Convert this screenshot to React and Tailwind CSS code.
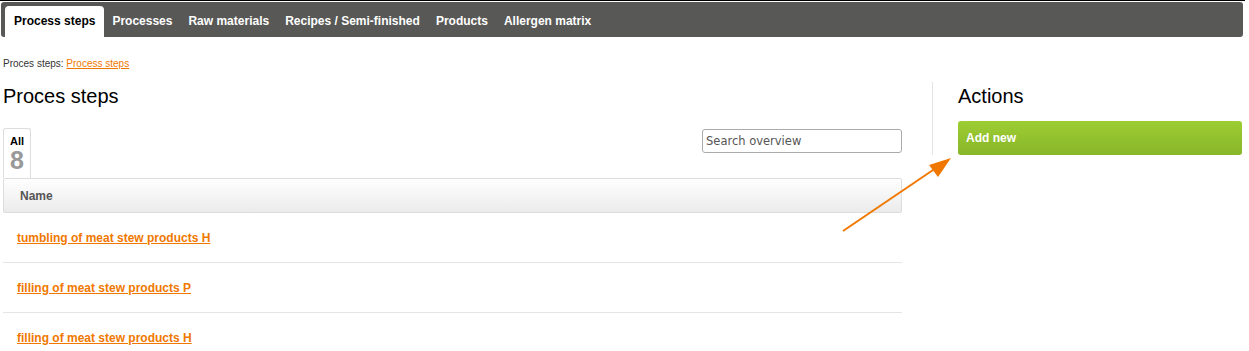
export default function App() {
  const tabs = ["Process steps", "Processes", "Raw materials", "Recipes / Semi-finished", "Products", "Allergen matrix"];
  const rows = ["tumbling of meat stew products H", "filling of meat stew products P", "filling of meat stew products H"];

  return (
    <div className="relative w-[1249px] h-[351px] overflow-hidden bg-white" style={{ fontFamily: '"Liberation Sans", Arial, sans-serif' }}>
      <div className="h-px bg-black w-[1245px]" />
      <div className="mt-px ml-px w-[1242px] h-[35px] bg-[#585856] rounded-[3px] flex items-end pl-[4px]">
        {tabs.map((t, i) => (
          <div
            key={t}
            className={
              i === 0
                ? "h-[31px] px-[9px] bg-white rounded-t-[4px] text-black text-[12px] font-bold flex items-center pb-[1px]"
                : "h-[31px] px-[8px] text-white text-[12px] font-bold flex items-center pb-[1px]"
            }
          >
            {t}
          </div>
        ))}
      </div>

      <div className="pl-[3px] mt-[21px] text-[10px] leading-[12px] text-[#333]">
        Proces steps: <a href="#" className="text-[#f07800] underline">Process steps</a>
      </div>

      <div className="flex pl-[3px] mt-[12px]">
        <div className="w-[899px]">
          <h1 className="mt-[3px] text-[20px] leading-[23px] text-black">Proces steps</h1>
          <div className="mt-[20px] flex items-start justify-between">
            <div className="w-[28px] h-[50px] border border-b-0 border-[#dddddd] rounded-t-[3px] flex flex-col items-center pt-[6px]">
              <span className="text-[11px] leading-[13px] font-bold text-black">All</span>
              <span className="text-[25px] leading-[24px] font-bold text-[#999999]">8</span>
            </div>
            <input
              placeholder="Search overview"
              className="mt-px w-[200px] h-[24px] border border-[#aaaaaa] rounded-[3px] px-[3px] text-[11.5px] text-[#555] placeholder:text-[#555] outline-none"
              style={{ fontFamily: '"DejaVu Sans", Verdana, sans-serif' }}
            />
          </div>
          <div className="h-[35px] border border-[#dddddd] rounded-[2px] bg-gradient-to-b from-white to-[#ebebeb] flex items-center pl-[16px]">
            <span className="text-[12px] font-bold text-[#555555]">Name</span>
          </div>
          {rows.map((r) => (
            <div key={r} className="h-[50px] border-b border-[#e5e5e5] flex items-center pl-[14px]">
              <a href="#" className="text-[12px] font-bold text-[#f07800] underline">{r}</a>
            </div>
          ))}
        </div>

        <div className="ml-[30px] w-px h-[73px] bg-[#e3e3e3]" />

        <div className="ml-[25px] w-[284px]">
          <h2 className="mt-[3px] text-[20px] leading-[23px] text-black">Actions</h2>
          <button className="mt-[13px] w-full h-[34px] rounded-[3px] bg-gradient-to-b from-[#9dcd33] to-[#88b62a] text-white text-[12px] font-bold text-left pl-[8px] pb-[1px]">
            Add new
          </button>
        </div>
      </div>

      <svg className="absolute left-0 top-0 pointer-events-none" width="1249" height="351">
        <line x1="843" y1="231" x2="936" y2="168" stroke="#f07800" strokeWidth="2" />
        <polygon points="951,158 929,165 938,177" fill="#f07800" />
      </svg>
    </div>
  );
}
